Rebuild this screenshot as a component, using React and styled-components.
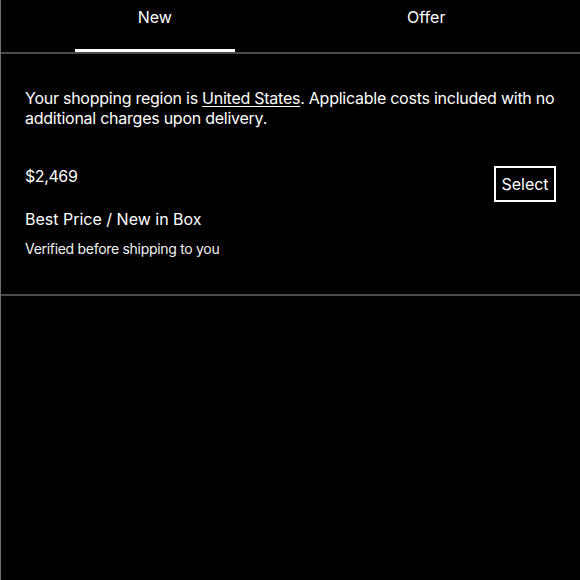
import styled, { createGlobalStyle } from 'styled-components';

const GlobalStyle = createGlobalStyle`
    html, body {
        margin: 0;
        padding: 0;
        background: #000;
    }
    * {
        box-sizing: border-box;
    }
`;

const Page = styled.div`
    min-height: 100vh;
    background: #000;
    color: #fff;
    border-left: 1px solid #6e6e6e;
    font-family: Inter, 'Liberation Sans', sans-serif;
    font-size: 16px;
    line-height: 20px;
`;

const TabBar = styled.div`
    display: grid;
    grid-template-columns: 1fr 1fr;
    padding: 0 18px;
    border-bottom: 2px solid #4a4a4a;
`;

const Tab = styled.button`
    display: flex;
    flex-direction: column;
    align-items: center;
    justify-content: space-between;
    height: 52px;
    padding: 7px 0 0;
    border: none;
    background: transparent;
    color: #fff;
    font: inherit;
    cursor: pointer;

    &::after {
        content: '';
        width: 160px;
        height: 3px;
        background: ${({ $active }) => ($active ? '#fff' : 'transparent')};
    }
`;

const Section = styled.section`
    padding: 34px 24px 35px;
    border-bottom: 2px solid #4a4a4a;
`;

const Notice = styled.p`
    margin: 0;
    letter-spacing: -0.25px;

    a {
        color: inherit;
        text-decoration: underline;
        text-underline-offset: 2px;
    }
`;

const OfferRow = styled.div`
    display: flex;
    justify-content: space-between;
    align-items: flex-start;
    margin-top: 38px;
`;

const OfferInfo = styled.div`
    display: flex;
    flex-direction: column;
`;

const Price = styled.div`
    font-size: 16px;
    letter-spacing: -0.4px;
`;

const Title = styled.div`
    margin-top: 23px;
    font-size: 16px;
`;

const Subtitle = styled.div`
    margin-top: 10px;
    font-size: 14px;
    letter-spacing: -0.3px;
    color: #f2f2f2;
`;

const SelectButton = styled.button`
    width: 62px;
    height: 36px;
    padding: 0;
    border: 2px solid #fff;
    background: transparent;
    color: #fff;
    font: inherit;
    cursor: pointer;
`;

const tabs = ['New', 'Offer'];

const App = () => {
    return (
        <>
            <GlobalStyle />
            <Page>
                <TabBar>
                    {tabs.map(tab => (
                        <Tab key={tab} $active={tab === 'New'}>
                            {tab}
                        </Tab>
                    ))}
                </TabBar>
                <Section>
                    <Notice>
                        Your shopping region is <a href="#region">United States</a>. Applicable costs
                        included with no additional charges upon delivery.
                    </Notice>
                    <OfferRow>
                        <OfferInfo>
                            <Price>$2,469</Price>
                            <Title>Best Price / New in Box</Title>
                            <Subtitle>Verified before shipping to you</Subtitle>
                        </OfferInfo>
                        <SelectButton>Select</SelectButton>
                    </OfferRow>
                </Section>
            </Page>
        </>
    );
};

export default App;
